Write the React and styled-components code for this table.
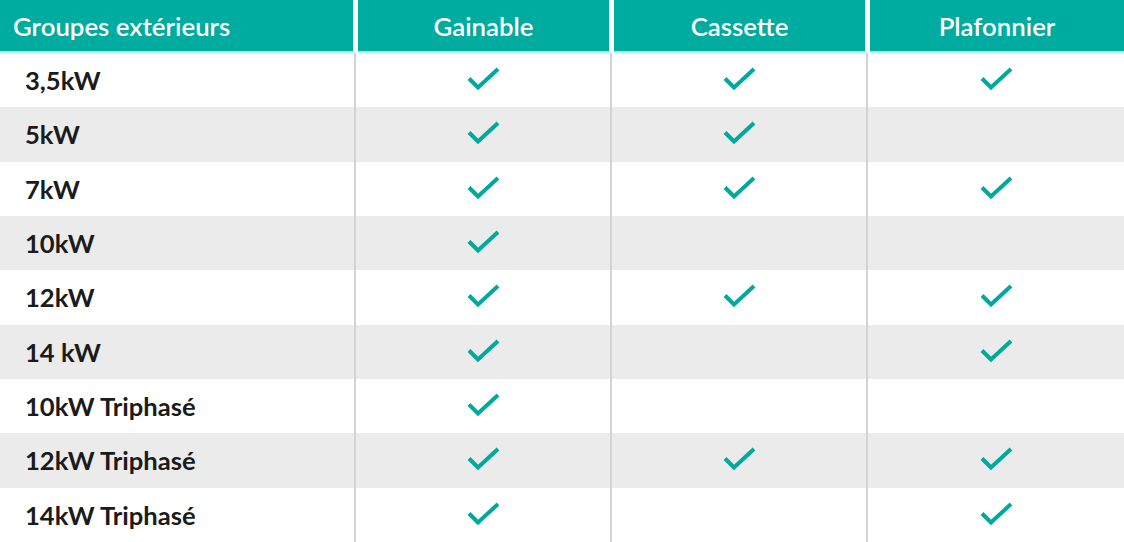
import React from 'react'
import styled, { createGlobalStyle } from 'styled-components'

const GlobalStyle = createGlobalStyle`
  html, body {
    margin: 0;
    padding: 0;
    background: #ffffff;
    font-family: Lato, "Open Sans", sans-serif;
  }
`

const columns = ['Gainable', 'Cassette', 'Plafonnier']

const rows = [
    { label: '3,5kW', values: [true, true, true] },
    { label: '5kW', values: [true, true, false] },
    { label: '7kW', values: [true, true, true] },
    { label: '10kW', values: [true, false, false] },
    { label: '12kW', values: [true, true, true] },
    { label: '14 kW', values: [true, false, true] },
    { label: '10kW Triphasé', values: [true, false, false] },
    { label: '12kW Triphasé', values: [true, true, true] },
    { label: '14kW Triphasé', values: [true, false, true] },
]

function Check() {
    return (
        <svg width="34" height="24" viewBox="0 0 34 24" fill="none">
            <path d="M3 11.5 L12 20.5 L32 2" stroke="#00a99d" strokeWidth="4" strokeLinejoin="miter" />
        </svg>
    )
}

function App() {
    return (
        <>
            <GlobalStyle />
            <Table>
                <Header>
                    <HeadCell $first>Groupes extérieurs</HeadCell>
                    {columns.map((c) => (
                        <HeadCell key={c}>{c}</HeadCell>
                    ))}
                </Header>
                <Body>
                    {rows.map((r, i) => (
                        <Row key={r.label} $striped={i % 2 === 1}>
                            <Label>{r.label}</Label>
                            {r.values.map((v, j) => (
                                <Cell key={j}>{v && <Check />}</Cell>
                            ))}
                        </Row>
                    ))}
                </Body>
            </Table>
        </>
    )
}

const Table = styled.div`
    width: 1124px;
    height: 542px;
    display: flex;
    flex-direction: column;
    overflow: hidden;
`

const Header = styled.div`
    display: grid;
    grid-template-columns: 353px 251px 251px 254px;
    column-gap: 5px;
    height: 53px;
    flex: none;
`

const HeadCell = styled.div`
    background: #00ab9f;
    border-bottom: 2px solid #aee9e3;
    color: #ffffff;
    font-size: 25.8px;
    font-weight: 600;
    display: flex;
    align-items: center;
    justify-content: ${(p) => (p.$first ? 'flex-start' : 'center')};
    padding-left: ${(p) => (p.$first ? '13px' : '0')};
`

const Body = styled.div`
    flex: 1;
    display: flex;
    flex-direction: column;
`

const Row = styled.div`
    flex: 1;
    display: grid;
    grid-template-columns: 354px 256px 256px 258px;
    background: ${(p) => (p.$striped ? '#ebebeb' : '#ffffff')};
`

const Label = styled.div`
    display: flex;
    align-items: center;
    padding-left: 25px;
    font-size: 25.6px;
    font-weight: 700;
    color: #1b1b1b;
`

const Cell = styled.div`
    border-left: 2px solid #d3d3d3;
    display: flex;
    align-items: center;
    justify-content: center;
    padding-bottom: 2px;
`

export default App
